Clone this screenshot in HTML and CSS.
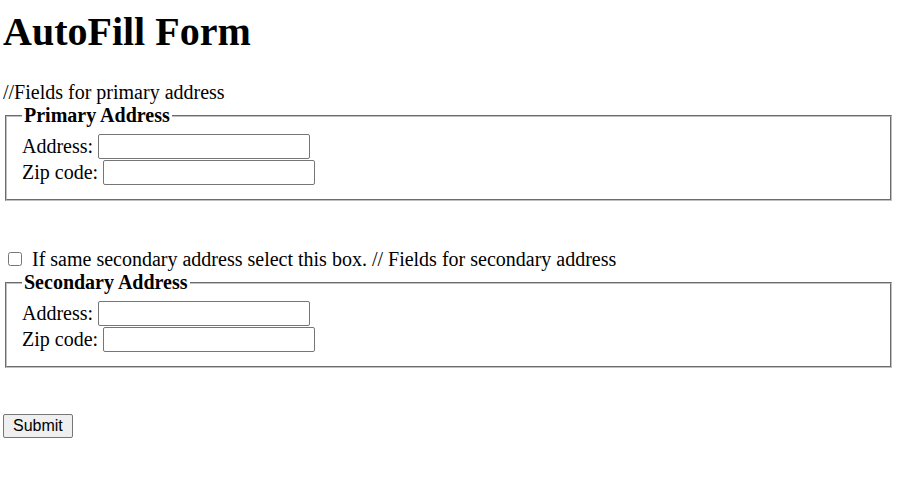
FILE: index.html
```html
<!DOCTYPE html>
<html>
<head>
<meta charset="utf-8">
<title>AutoFill Form</title>
<link rel="stylesheet" href="styles.css">
</head>
<body>
<h1 class="title">AutoFill Form</h1>
<form class="form">
  <div class="comment">//Fields for primary address</div>
  <fieldset class="group">
    <legend class="legend">Primary Address</legend>
    <div class="row"><label>Address:</label> <input type="text" class="field"></div>
    <div class="row"><label>Zip code:</label> <input type="text" class="field"></div>
  </fieldset>
  <div class="check-line"><input type="checkbox" class="check"> If same secondary address select this box. // Fields for secondary address</div>
  <fieldset class="group">
    <legend class="legend">Secondary Address</legend>
    <div class="row"><label>Address:</label> <input type="text" class="field"></div>
    <div class="row"><label>Zip code:</label> <input type="text" class="field"></div>
  </fieldset>
  <div class="actions"><button type="button" class="submit">Submit</button></div>
</form>
</body>
</html>
```
FILE: styles.css
```css
html, body {
  background: #fff;
}
body {
  margin: 3px 7px 3px 3px;
  font-family: "Liberation Serif", "Times New Roman", serif;
  font-size: 20px;
  color: #000;
}
.title {
  font-size: 40px;
  font-weight: bold;
  margin: 0 0 26px;
  padding-top: 6px;
  line-height: 46px;
}
.comment {
  line-height: 23px;
}
.group {
  margin: 0 2px;
  border: 2px groove rgb(192, 192, 192);
  padding: 7px 15px 13px 15px;
}
.legend {
  font-weight: bold;
  font-size: 20px;
  padding: 0 2px;
  line-height: 23px;
}
.row {
  height: 26px;
  display: flex;
  align-items: flex-start;
  gap: 5px;
}
.row label {
  line-height: 25px;
}
.field {
  width: 206px;
  height: 21px;
  border: 1px solid #767676;
  border-radius: 2px;
  padding: 1px 2px;
  margin: 0;
  font: 16px "Liberation Sans", Arial, sans-serif;
}
.check-line {
  margin-top: 46px;
  display: flex;
  align-items: center;
  line-height: 24px;
}
.check {
  width: 14px;
  height: 14px;
  margin: 0 10px 0 5px;
}
.actions {
  margin-top: 45px;
}
.submit {
  font: 16px "Liberation Sans", Arial, sans-serif;
  padding: 1px 9px;
  height: 24px;
  border: 1px solid #767676;
  border-radius: 2px;
  background: #efefef;
  color: #000;
}
```
